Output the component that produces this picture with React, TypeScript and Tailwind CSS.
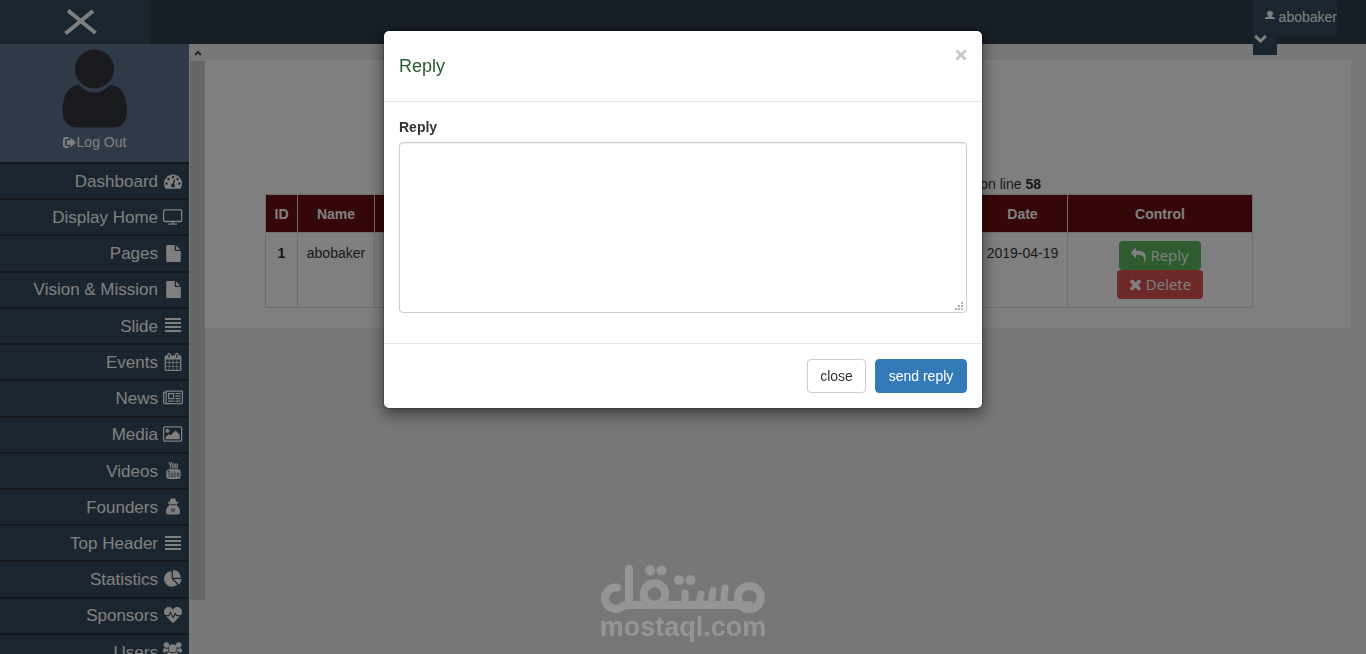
import { useState } from "react"
import type { ReactNode } from "react"
import { FaHeartbeat } from "react-icons/fa"
import { TfiYoutube } from "react-icons/tfi"

interface GlyphProps {
  d: string
  viewBox?: string
  className?: string
}

function Glyph({ d, viewBox = "0 0 1792 1792", className = "h-[17px]" }: GlyphProps) {
  return (
    <svg viewBox={viewBox} className={className} fill="currentColor" fillRule="evenodd" aria-hidden="true">
      <path d={d} />
    </svg>
  )
}

const paths = {
  tachometer:
    "M384 1152q0-53-37.5-90.5t-90.5-37.5-90.5 37.5-37.5 90.5 37.5 90.5 90.5 37.5 90.5-37.5 37.5-90.5zm192-448q0-53-37.5-90.5t-90.5-37.5-90.5 37.5-37.5 90.5 37.5 90.5 90.5 37.5 90.5-37.5 37.5-90.5zm428 481l101-382q6-26-7.5-48.5t-38.5-29.5-48 6.5-30 39.5l-101 382q-60 5-107 43.5t-63 98.5q-20 77 20 146t117 89 146-20 89-117q16-60-6-117t-72-91zm660-33q0-53-37.5-90.5t-90.5-37.5-90.5 37.5-37.5 90.5 37.5 90.5 90.5 37.5 90.5-37.5 37.5-90.5zm-640-640q0-53-37.5-90.5t-90.5-37.5-90.5 37.5-37.5 90.5 37.5 90.5 90.5 37.5 90.5-37.5 37.5-90.5zm448 192q0-53-37.5-90.5t-90.5-37.5-90.5 37.5-37.5 90.5 37.5 90.5 90.5 37.5 90.5-37.5 37.5-90.5zm320 448q0 261-141 483-19 29-54 29h-1402q-35 0-54-29-141-221-141-483 0-182 71-348t191-286 286-191 348-71 348 71 286 191 191 286 71 348z",
  television:
    "M1792 1248v-960q0-13-9.5-22.5t-22.5-9.5h-1600q-13 0-22.5 9.5t-9.5 22.5v960q0 13 9.5 22.5t22.5 9.5h1600q13 0 22.5-9.5t9.5-22.5zm128-960v960q0 66-47 113t-113 47h-736v128h352q14 0 23 9t9 23v64q0 14-9 23t-23 9h-832q-14 0-23-9t-9-23v-64q0-14 9-23t23-9h352v-128h-736q-66 0-113-47t-47-113v-960q0-66 47-113t113-47h1600q66 0 113 47t47 113z",
  file: "M1152 512v-472q22 14 36 28l408 408q14 14 28 36h-472zm-128 32q0 40 28 68t68 28h544v1056q0 40-28 68t-68 28h-1344q-40 0-68-28t-28-68v-1600q0-40 28-68t68-28h800v544z",
  justify: "M0 1h16v2H0zM0 5h16v2H0zM0 9h16v2H0zM0 13h16v2H0z",
  calendar:
    "M192 1664h288v-288h-288v288zm352 0h320v-288h-320v288zm-352-352h288v-320h-288v320zm352 0h320v-320h-320v320zm-352-384h288v-288h-288v288zm736 736h320v-288h-320v288zm-384-736h320v-288h-320v288zm768 736h288v-288h-288v288zm-384-352h320v-320h-320v320zm-352-864v-288q0-13-9.5-22.5t-22.5-9.5h-64q-13 0-22.5 9.5t-9.5 22.5v288q0 13 9.5 22.5t22.5 9.5h64q13 0 22.5-9.5t9.5-22.5zm736 864h288v-320h-288v320zm-384-384h320v-288h-320v288zm384 0h288v-288h-288v288zm32-480v-288q0-13-9.5-22.5t-22.5-9.5h-64q-13 0-22.5 9.5t-9.5 22.5v288q0 13 9.5 22.5t22.5 9.5h64q13 0 22.5-9.5t9.5-22.5zm384-64v1280q0 52-38 90t-90 38h-1408q-52 0-90-38t-38-90v-1280q0-52 38-90t90-38h128v-96q0-66 47-113t113-47h64q66 0 113 47t47 113v96h384v-96q0-66 47-113t113-47h64q66 0 113 47t47 113v96h128q52 0 90 38t38 90z",
  newspaper:
    "M1024 512h-384v384h384v-384zm128 640v128h-640v-128h640zm0-768v640h-640v-640h640zm640 768v128h-512v-128h512zm0-256v128h-512v-128h512zm0-256v128h-512v-128h512zm0-256v128h-512v-128h512zm-1536 960v-960h-128v960q0 26 19 45t45 19 45-19 19-45zm1664 0v-1088h-1536v1088q0 33-11 64h1483q26 0 45-19t19-45zm128-1216v1216q0 80-56 136t-136 56h-1664q-80 0-136-56t-56-136v-1088h256v-128h1792z",
  image:
    "M576 576q0 80-56 136t-136 56-136-56-56-136 56-136 136-56 136 56 56 136zm1024 384v448h-1408v-192l320-320 160 160 512-512zm96-704h-1600q-13 0-22.5 9.5t-9.5 22.5v1216q0 13 9.5 22.5t22.5 9.5h1600q13 0 22.5-9.5t9.5-22.5v-1216q0-13-9.5-22.5t-22.5-9.5zm160 32v1216q0 66-47 113t-113 47h-1600q-66 0-113-47t-47-113v-1216q0-66 47-113t113-47h1600q66 0 113 47t47 113z",
  secret:
    "M4.800.500Q5.800 0 7 .800 8.200 0 9.200.500L10.200 3.500Q12.500 4 12.500 4.700 12.500 5.300 10.700 5.700L10.700 7.500Q14 9 14 14 14 16.500 11.500 16.500H2.500Q0 16.500 0 14 0 9 3.300 7.500L3.300 5.700Q1.500 5.300 1.500 4.700 1.500 4 3.800 3.500ZM4.300 6.200V7.300H6.300L7 6.800 7.700 7.300H9.700V6.200ZM5 9.800 6 15.500 6.700 11.500ZM9 9.800 8 15.500 7.300 11.500Z",
  users:
    "M3.300.200A2.600 2.600 0 1 1 3.200 5.400 2.600 2.600 0 0 1 3.300.200ZM15 .200A2.600 2.600 0 1 1 14.900 5.400 2.600 2.600 0 0 1 15 .200ZM9.200 2.200A3.800 3.800 0 1 1 9.100 9.800 3.800 3.800 0 0 1 9.200 2.200ZM0 9Q0 5.800 1.500 5.800 3 6.500 4.700 6.100 4.700 8 5.700 9H3.500Q3 9.500 2.500 10H1Q0 10 0 9ZM18.200 9Q18.200 5.800 16.700 5.800 15.200 6.500 13.500 6.100 13.500 8 12.500 9H14.700Q15.200 9.500 15.700 10H17.200Q18.200 10 18.200 9ZM5.500 9.500Q9 12 12.700 9.500 15.500 10 15.500 14.500 15.500 17 13 17H5.200Q2.700 17 2.700 14.500 2.700 10 5.500 9.500Z",
  pie: "M768 890l546 546q-106 108-247.5 168t-298.5 60q-209 0-385.5-103t-279.5-279.5-103-385.5 103-385.5 279.5-279.5 385.5-103v762zm187 6h773q0 157-60 298.5t-168 247.5zm709-128h-768v-768q209 0 385.500 103t279.500 279.500 103 385.500z",
  logout: "M5.500 1V3H3Q2 3 2 4V9Q2 10 3 10H5.500V12H3Q0 12 0 9V4Q0 1 3 1ZM7.500 1.500 13 6.500 7.500 11.500V8.700H3.800V4.300H7.500Z",
  reply:
    "M1792 1120q0 166-127 451-3 7-10.5 24t-13.5 30-13 22q-12 17-28 17-15 0-23.5-10t-8.5-25q0-9 2.5-26.5t2.5-23.5q5-68 5-123 0-112-19.5-200.5t-54-153.5-89-112-117-78-141-48.5-157.5-24-175-7.5h-224v256q0 26-19 45t-45 19-45-19l-512-512q-19-19-19-45t19-45l512-512q19-19 45-19t45 19 19 45v256h224q713 0 874 403 53 134 53 333z",
  times:
    "M1490 1322q0 40-28 68l-136 136q-28 28-68 28t-68-28l-294-294-294 294q-28 28-68 28t-68-28l-136-136q-28-28-28-68t28-68l294-294-294-294q-28-28-28-68t28-68l136-136q28-28 68-28t68 28l294 294 294-294q28-28 68-28t68 28l136 136q28 28 28 68t-28 68l-294 294 294 294q28 28 28 68z",
}

const menu: { label: string; icon: ReactNode }[] = [
  { label: "Dashboard", icon: <Glyph d={paths.tachometer} className="h-[18px]" /> },
  { label: "Display Home", icon: <Glyph d={paths.television} viewBox="0 0 1920 1792" className="h-[18px]" /> },
  { label: "Pages", icon: <Glyph d={paths.file} /> },
  { label: "Vision & Mission", icon: <Glyph d={paths.file} /> },
  { label: "Slide", icon: <Glyph d={paths.justify} viewBox="0 0 16 16" className="size-4" /> },
  { label: "Events", icon: <Glyph d={paths.calendar} className="h-[18px]" /> },
  { label: "News", icon: <Glyph d={paths.newspaper} viewBox="0 0 2048 1792" className="h-[18px]" /> },
  { label: "Media", icon: <Glyph d={paths.image} viewBox="-64 0 1920 1792" className="h-[18px]" /> },
  { label: "Videos", icon: <TfiYoutube className="size-[17px]" stroke="currentColor" strokeWidth="0.3" /> },
  { label: "Founders", icon: <Glyph d={paths.secret} viewBox="0 0 14 17" /> },
  { label: "Top Header", icon: <Glyph d={paths.justify} viewBox="0 0 16 16" className="size-4" /> },
  { label: "Statistics", icon: <Glyph d={paths.pie} className="h-[18px]" /> },
  { label: "Sponsors", icon: <FaHeartbeat className="size-[18px]" /> },
  { label: "Users", icon: <Glyph d={paths.users} viewBox="0 0 19 17" className="h-[18px]" /> },
]

function Header() {
  return (
    <header className="relative flex h-11 shrink-0 justify-between bg-[#2d3c4d] text-white">
      <button type="button" aria-label="Toggle menu" className="flex w-[150px] bg-[#364b5e] pt-[8px] pl-[63px]">
        <svg viewBox="0 0 35 28" className="h-7 w-[35px]" fill="none" stroke="currentColor" strokeWidth="4">
          <path d="M5 2.5 32.500 25M30 3 2.5 25.5" />
        </svg>
      </button>
      <a href="#user" className="mr-[29px] flex h-[55px] w-[84px] flex-col items-start text-sm">
        <span className="flex h-[35px] w-full items-center justify-end bg-[#364b5e] pb-[2px]">
          <svg viewBox="0 0 10 8" className="mr-1 mb-1 h-2 w-[10px]" fill="currentColor">
            <path d="M5 0C7.300 0 8 1.200 7.900 2.700 7.800 4 7.200 4.700 6.500 5.200V5.500L9.200 6.300Q10 6.600 10 8H0Q0 6.600.800 6.300L3.500 5.500V5.200C2.800 4.700 2.200 4 2.100 2.700 2 1.200 2.700 0 5 0Z" />
          </svg>
          abobaker
        </span>
        <span className="h-5 w-6 bg-[#364b5e] pl-px">
          <svg viewBox="0 0 13 8" className="h-2 w-[13px]" fill="none" stroke="currentColor" strokeWidth="3">
            <path d="M1.200 1 6.500 6 11.800 1" />
          </svg>
        </span>
      </a>
    </header>
  )
}

function Sidebar() {
  return (
    <aside className="w-[189px] shrink-0 bg-[#364b5e] text-white">
      <div className="flex h-[120px] flex-col items-center border-b-2 border-[#2b3138] bg-[#5f7592] pt-[5px]">
        <svg viewBox="0 0 66 80" className="h-20 w-[66px] text-[#30353d]" fill="currentColor" aria-hidden="true">
          <circle cx="32.500" cy="20" r="19.500" />
          <path d="M17 36Q24 43.500 32.500 43.500T48 36C60 36 65 48 65 62 65 72 60 78.500 51 78.500H15C6 78.500.500 72 .500 62 .500 48 6 36 17 36Z" />
        </svg>
        <a href="#logout" className="mt-[3px] flex items-center text-sm">
          <Glyph d={paths.logout} viewBox="0 0 14 13" className="h-[13px] w-[14px]" />
          Log Out
        </a>
      </div>
      <nav className="grid h-[507px] auto-rows-fr">
        {menu.map((item) => (
          <a
            key={item.label}
            href="#menu"
            className="flex items-center justify-end gap-[5px] border-b-2 border-[#2b3138] pt-px pr-[6px] text-[17px]"
          >
            {item.label}
            <span className="flex w-5 justify-center pb-[2px]">{item.icon}</span>
          </a>
        ))}
      </nav>
    </aside>
  )
}

function Scrollbar() {
  return (
    <div className="w-4 shrink-0 border-l border-[#f0f0f0] bg-[#f0f0f0]">
      <div className="flex h-[17px] items-center justify-center">
        <svg viewBox="0 0 8 6" className="h-[6px] w-2" fill="none" stroke="#504050" strokeWidth="2">
          <path d="M1 5 4 2l3 3" />
        </svg>
      </div>
      <div className="h-[539px] bg-[#cdcdc9]" />
    </div>
  )
}

const cell = "border border-[#ddd] p-2"

function Messages({ onReply }: { onReply: () => void }) {
  return (
    <section className="mt-4 mr-[15px] h-[268px] bg-white px-[60px] pt-[114px] text-sm text-[#333]">
      <div className="mr-[38px]">
        <p className="pr-[212px] text-right">
          on line <b>58</b>
        </p>
        <table className="w-full table-fixed border-collapse text-center">
          <thead>
            <tr className="h-[38px] bg-[#6c0e10] text-white">
              <th className={`${cell} w-8`}>ID</th>
              <th className={`${cell} w-[77px]`}>Name</th>
              <th className={cell}></th>
              <th className={`${cell} w-[90px]`}>Date</th>
              <th className={`${cell} w-[185px]`}>Control</th>
            </tr>
          </thead>
          <tbody>
            <tr className="h-[75px] align-top leading-6">
              <th className={cell}>1</th>
              <td className={`${cell} whitespace-nowrap`}>abobaker</td>
              <td className={cell}></td>
              <td className={`${cell} whitespace-nowrap`}>2019-04-19</td>
              <td className={cell}>
                <div className="flex flex-col items-center font-['Open_Sans',sans-serif] text-[15px] text-white">
                  <button
                    type="button"
                    onClick={onReply}
                    className="flex h-[29px] items-center gap-1 rounded bg-[#5cb85c] px-3 pb-px"
                  >
                    <Glyph d={paths.reply} className="size-[15px]" />
                    Reply
                  </button>
                  <button type="button" className="flex h-[29px] items-center gap-1 rounded bg-[#d9534f] px-3 pb-px">
                    <Glyph d={paths.times} viewBox="192 192 1408 1408" className="size-[13px]" />
                    Delete
                  </button>
                </div>
              </td>
            </tr>
          </tbody>
        </table>
      </div>
    </section>
  )
}

function ReplyModal({ onClose }: { onClose: () => void }) {
  return (
    <div
      role="dialog"
      aria-labelledby="reply-title"
      className="mx-auto mt-[30px] w-[600px] rounded-md border border-black/20 bg-white bg-clip-padding text-sm text-[#333] shadow-[0_5px_15px_rgba(0,0,0,0.5)]"
    >
      <div className="flex h-[71px] items-start justify-between border-b border-[#e5e5e5] p-[15px]">
        <h4 id="reply-title" className="mt-[10px] text-lg leading-5 text-[#285a2d]">
          Reply
        </h4>
        <button type="button" aria-label="Close" onClick={onClose} className="pt-[3px] text-[#c8c8c8]">
          <svg viewBox="0 0 12 12" className="size-3" fill="none" stroke="currentColor" strokeWidth="3">
            <path d="M1.500 1.500 10.500 10.500M10.500 1.500 1.500 10.500" />
          </svg>
        </button>
      </div>
      <div className="p-[15px]">
        <label htmlFor="reply" className="mb-[5px] block leading-5 font-bold">
          Reply
        </label>
        <div className="relative mb-[15px]">
          <textarea
            id="reply"
            className="block h-[171px] w-full resize-none rounded border border-[#ccc] px-3 py-[6px] shadow-[inset_0_1px_1px_rgba(0,0,0,0.075)] outline-none"
          />
          <svg viewBox="0 0 8 8" className="pointer-events-none absolute right-1 bottom-[3px] size-2" fill="#b5b5b5">
            <path d="M6 0h2v2H6zM3 3h2v2H3zM6 3h2v2H6zM0 6h2v2H0zM3 6h2v2H3zM6 6h2v2H6z" />
          </svg>
        </div>
      </div>
      <div className="flex justify-end gap-[9px] border-t border-[#e5e5e5] p-[15px]">
        <button type="button" onClick={onClose} className="h-[34px] min-w-[59px] rounded border border-[#ccc] px-3">
          close
        </button>
        <button type="button" className="h-[34px] min-w-[92px] rounded border border-[#337ab7] bg-[#337ab7] px-3 text-white">
          send reply
        </button>
      </div>
    </div>
  )
}

function Watermark() {
  return (
    <div className="pointer-events-none fixed inset-x-0 bottom-[13px] z-30 flex flex-col items-center text-[#959595]">
      <svg viewBox="0 0 164 48" className="h-12 w-[164px]" fill="none" stroke="currentColor" strokeWidth="8" strokeLinecap="round">
        <path d="M16 22.500A10.700 10.700 0 1 0 22 41Q24 40 27 40H148" />
        <path d="M28 4V38" />
        <circle cx="53.500" cy="29" r="10.800" />
        <path d="M84 28V38M98 38 100 29M110 38 112 25.500M122.500 38 124 23" strokeWidth="7" />
        <circle cx="148.300" cy="32.500" r="11.500" />
        <g fill="currentColor" stroke="none">
          <circle cx="49" cy="5.300" r="5.100" />
          <circle cx="60.400" cy="5.300" r="5.100" />
          <circle cx="78" cy="15.300" r="5" />
          <circle cx="89.500" cy="15.300" r="5" />
        </g>
      </svg>
      <span className="text-[27px] leading-7 font-bold">mostaql.com</span>
    </div>
  )
}

export default function App() {
  const [open, setOpen] = useState(true)

  return (
    <div className="flex h-screen flex-col overflow-hidden bg-[#eee] font-['Liberation_Sans',Arial,sans-serif]">
      <Header />
      <div className="flex min-h-0 flex-1">
        <Sidebar />
        <Scrollbar />
        <main className="min-w-0 flex-1">
          <Messages onReply={() => setOpen(true)} />
        </main>
      </div>
      {open && (
        <div className="fixed inset-0 z-20 bg-black/50">
          <ReplyModal onClose={() => setOpen(false)} />
        </div>
      )}
      <Watermark />
    </div>
  )
}
